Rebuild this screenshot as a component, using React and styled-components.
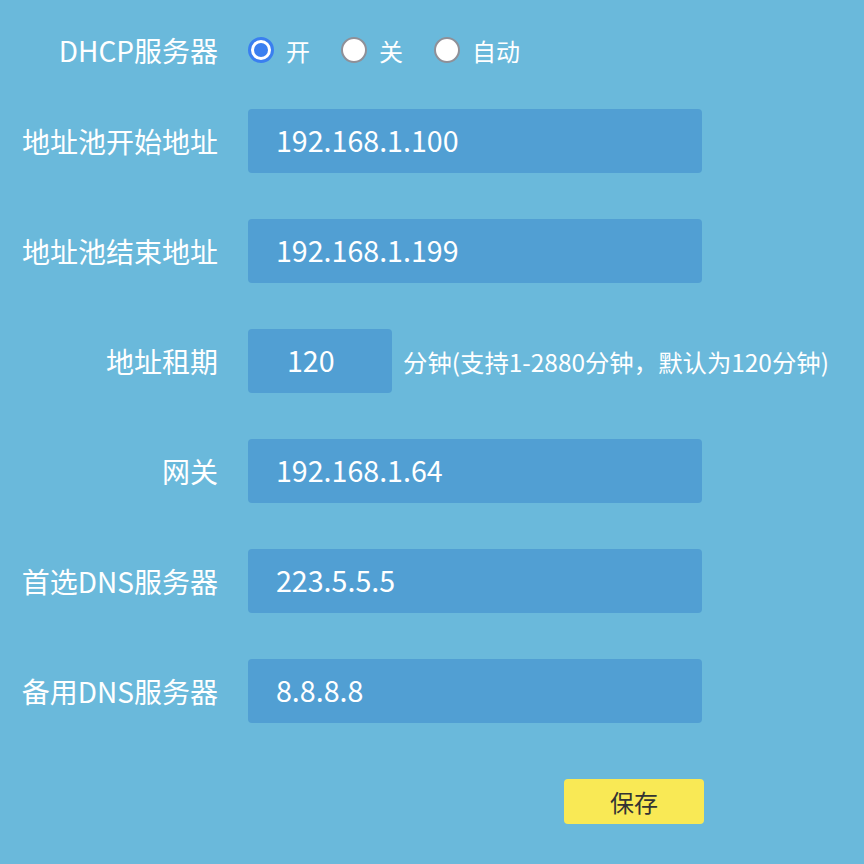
import styled, { createGlobalStyle } from "styled-components";

const Global = createGlobalStyle`
  html, body {
    margin: 0;
    padding: 0;
    background: #6ab9db;
  }
  body {
    font-family: "Noto Sans CJK SC", "Noto Sans", sans-serif;
    color: #fff;
  }
`;

const Page = styled.div`
  width: 864px;
  height: 864px;
  background: #6ab9db;
  display: flex;
  flex-direction: column;
  padding-top: 30px;
  box-sizing: border-box;
`;

const Row = styled.div`
  display: grid;
  grid-template-columns: 218px 1fr;
  column-gap: 30px;
  align-items: center;
  height: ${(p) => p.$h || 64}px;
  margin-bottom: ${(p) => p.$mb ?? 46}px;
`;

const Label = styled.div`
  text-align: right;
  font-size: 28px;
  line-height: 1;
  white-space: nowrap;
`;

const Field = styled.div`
  display: flex;
  align-items: center;
  height: 100%;
`;

const Input = styled.div`
  box-sizing: border-box;
  width: ${(p) => p.$w || 454}px;
  height: 64px;
  background: #519fd3;
  border-radius: 4px;
  padding-left: ${(p) => p.$pl || 28}px;
  padding-bottom: 3px;
  display: flex;
  align-items: center;
  font-size: 28.6px;
  color: #fff;
`;

const Hint = styled.span`
  margin-left: 11px;
  font-size: 24.4px;
  white-space: nowrap;
`;

const RadioGroup = styled.div`
  display: flex;
  align-items: center;
`;

const Option = styled.label`
  display: flex;
  align-items: center;
  margin-right: 31px;
  font-size: 24px;
  gap: 12px;
`;

const Dot = styled.span`
  box-sizing: border-box;
  width: 26px;
  height: 26px;
  border-radius: 50%;
  background: #fff;
  border: ${(p) => (p.$on ? "3px solid #3a7ff0" : "2px solid #8f9098")};
  display: flex;
  align-items: center;
  justify-content: center;
  &::after {
    content: "";
    display: ${(p) => (p.$on ? "block" : "none")};
    width: 14px;
    height: 14px;
    border-radius: 50%;
    background: #3a7ff0;
  }
`;

const Actions = styled.div`
  margin-top: 10px;
  padding-left: 564px;
`;

const SaveButton = styled.button`
  width: 140px;
  height: 45px;
  border: none;
  border-radius: 4px;
  background: #f9e955;
  color: #333;
  font-family: "Noto Sans CJK SC", sans-serif;
  font-size: 24px;
  padding: 0;
`;

const fields = [
  { label: "地址池开始地址", value: "192.168.1.100" },
  { label: "地址池结束地址", value: "192.168.1.199" },
  { label: "地址租期", value: "120", short: true },
  { label: "网关", value: "192.168.1.64" },
  { label: "首选DNS服务器", value: "223.5.5.5" },
  { label: "备用DNS服务器", value: "8.8.8.8" },
];

export default function App() {
  return (
    <>
      <Global />
      <Page>
        <Row $h={40} $mb={39}>
          <Label>DHCP服务器</Label>
          <RadioGroup>
            <Option>
              <Dot $on />开
            </Option>
            <Option>
              <Dot />关
            </Option>
            <Option>
              <Dot />自动
            </Option>
          </RadioGroup>
        </Row>
        {fields.map((f) => (
          <Row key={f.label}>
            <Label>{f.label}</Label>
            <Field>
              {f.short ? (
                <>
                  <Input $w={144} $pl={39}>{f.value}</Input>
                  <Hint>分钟(支持1-2880分钟，默认为120分钟)</Hint>
                </>
              ) : (
                <Input>{f.value}</Input>
              )}
            </Field>
          </Row>
        ))}
        <Actions>
          <SaveButton>保存</SaveButton>
        </Actions>
      </Page>
    </>
  );
}
